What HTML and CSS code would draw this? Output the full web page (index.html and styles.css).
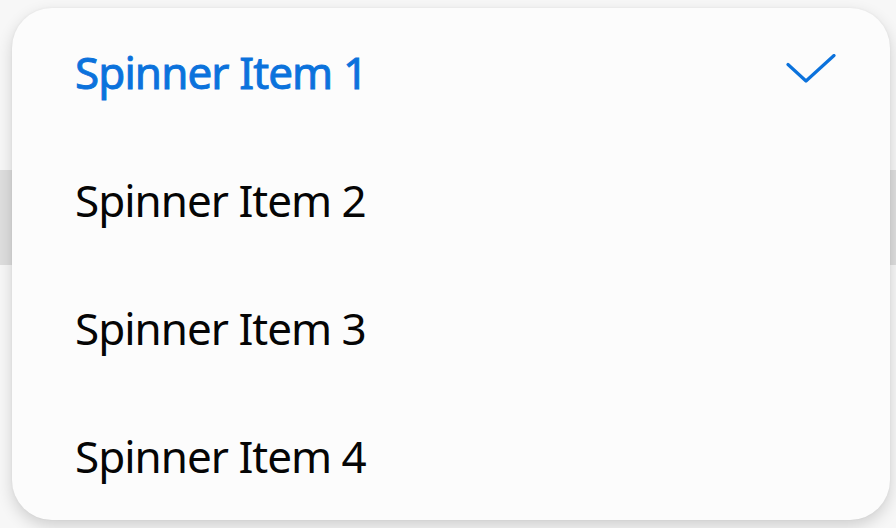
FILE: index.html
```html
<!DOCTYPE html>
<html>
<head>
<meta charset="utf-8">
<link rel="stylesheet" href="styles.css">
</head>
<body>
<div class="screen">
  <div class="toolbar"></div>
  <div class="popup">
    <div class="item selected">
      <span class="label">Spinner Item 1</span>
      <svg class="check" width="52" height="32" viewBox="0 0 52 32"><path d="M4 10.5 L22 27 L50 1.5" fill="none" stroke="#0b72dc" stroke-width="3.2" stroke-linecap="round" stroke-linejoin="round"/></svg>
    </div>
    <div class="item"><span class="label">Spinner Item 2</span></div>
    <div class="item"><span class="label">Spinner Item 3</span></div>
    <div class="item"><span class="label">Spinner Item 4</span></div>
  </div>
</div>
</body>
</html>
```
FILE: styles.css
```css
html, body {
  margin: 0;
  padding: 0;
  background: #f7f7f7;
}
.screen {
  position: relative;
  width: 896px;
  height: 528px;
  overflow: hidden;
}
.toolbar {
  margin-top: 170px;
  height: 95px;
  background: #dedede;
}
.popup {
  position: absolute;
  left: 12px;
  top: 8px;
  width: 878px;
  height: 512px;
  background: #fcfcfc;
  border-radius: 40px;
  box-shadow: 0 6px 16px rgba(0,0,0,0.16), 0 0 3px rgba(0,0,0,0.05);
  display: flex;
  flex-direction: column;
}
.item {
  height: 128px;
  display: flex;
  align-items: center;
  justify-content: space-between;
  padding: 0 54px 0 63px;
  font-family: "Noto Sans", sans-serif;
  font-size: 44px;
  letter-spacing: -1px;
  color: #050505;
}
.item.selected {
  color: #0b72dc;
  font-weight: 400;
  letter-spacing: -0.9px;
  -webkit-text-stroke: 0.9px #0b72dc;
}
.check {
  margin-top: -4px;
}
```
